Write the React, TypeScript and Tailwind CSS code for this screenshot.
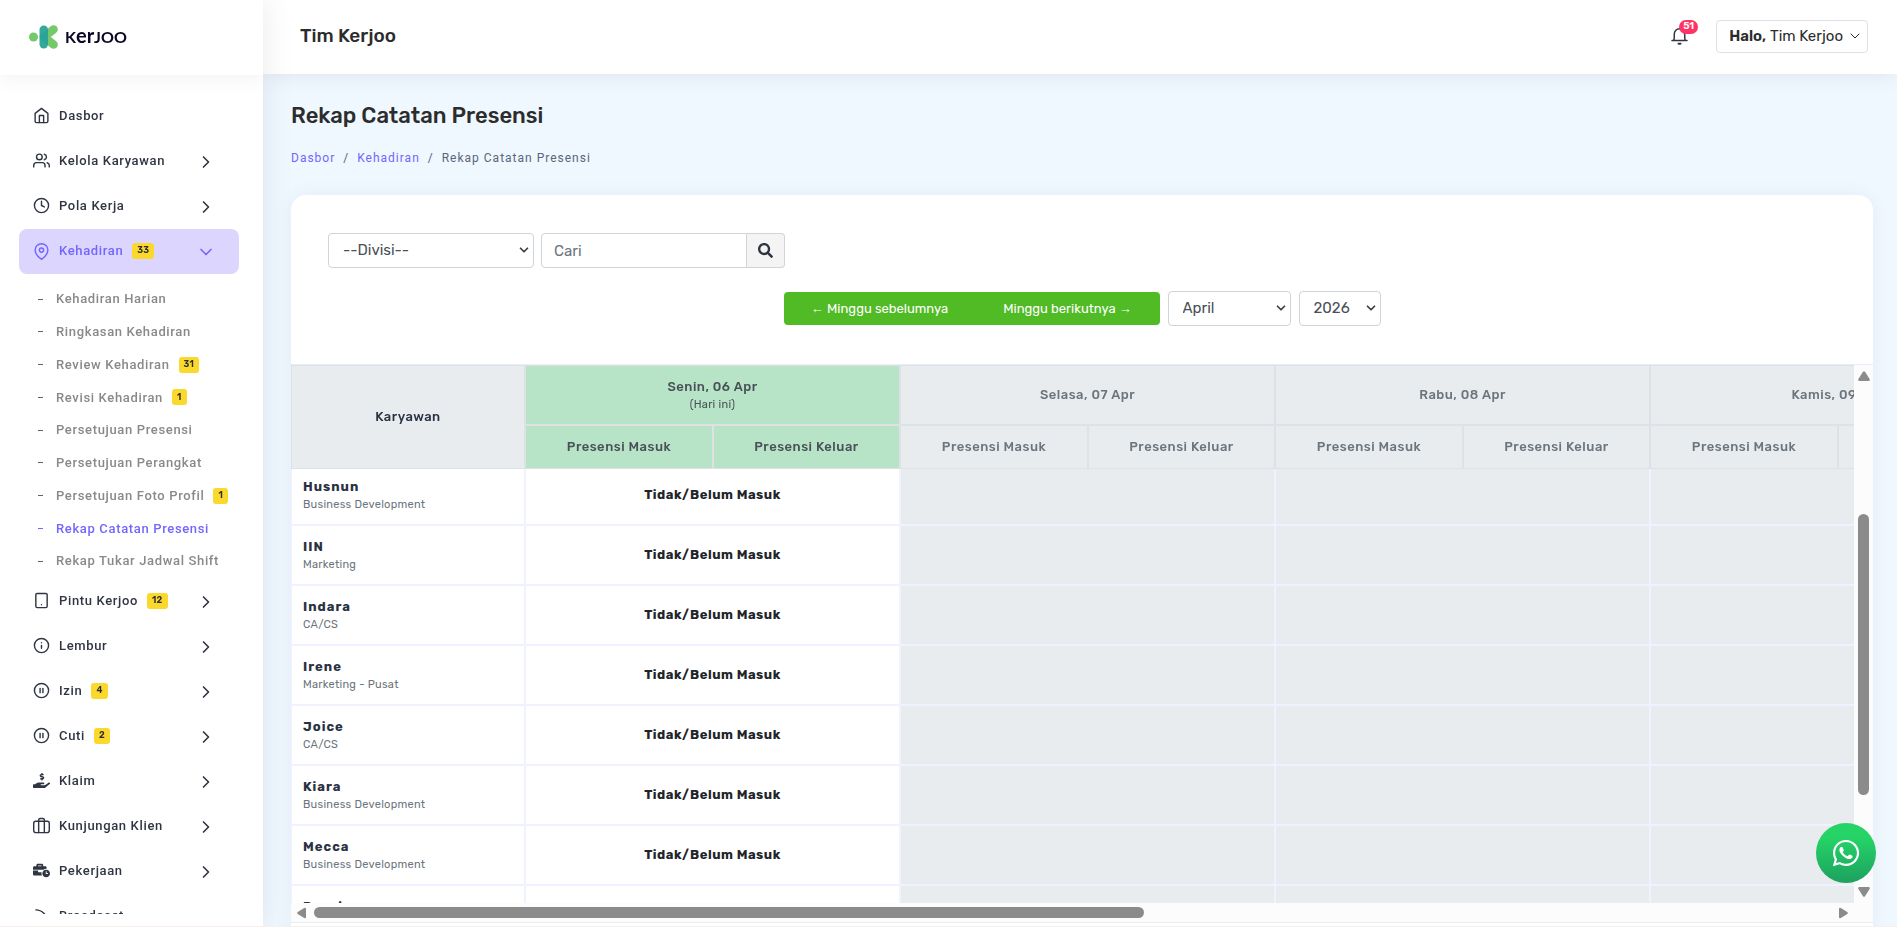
import React, { useEffect, useRef } from "react";
import { ChevronDown, ChevronRight, Info, CirclePause } from "lucide-react";
import { FiClock, FiHome, FiMapPin, FiTablet, FiUsers } from "react-icons/fi";
import { FaBusinessTime, FaHandHoldingUsd, FaSearch, FaWhatsapp } from "react-icons/fa";

const LuggageIcon = ({ className }: { className?: string }) => (
  <svg viewBox="0 0 24 24" className={className} fill="none" stroke="currentColor" strokeWidth="2" strokeLinecap="round" strokeLinejoin="round">
    <rect x="1" y="6" width="22" height="16" rx="3" />
    <path d="M8 22V4a2 2 0 0 1 2-2h4a2 2 0 0 1 2 2v18" />
  </svg>
);

const CastIcon = ({ className }: { className?: string }) => (
  <svg viewBox="0 0 24 24" className={className} fill="none" stroke="currentColor" strokeWidth="2" strokeLinecap="round">
    <path d="M4 4a16 16 0 0 1 16 16M4 11a9 9 0 0 1 9 9" />
    <circle cx="5" cy="19" r="1" />
  </svg>
);

const BellIcon = ({ className }: { className?: string }) => (
  <svg viewBox="0 0 17 17" className={className} fill="none" stroke="currentColor" strokeWidth="1.5" strokeLinecap="round" strokeLinejoin="round">
    <path d="M1 12.500h15M2.800 12.300Q3.300 11.500 3.300 7.500V6a5.200 5.200 0 0 1 10.400 0v1.500q0 4 .5 4.800" />
    <path d="M7.200 15.400Q8.500 16.800 9.800 15.400Z" fill="currentColor" />
  </svg>
);

type Item = {
  label: string;
  icon: React.ComponentType<{ className?: string }>;
  badge?: string;
  leaf?: boolean;
};

const topItems: Item[] = [
  { label: "Dasbor", icon: FiHome, leaf: true },
  { label: "Kelola Karyawan", icon: FiUsers },
  { label: "Pola Kerja", icon: FiClock },
];

const subItems = [
  { label: "Kehadiran Harian" },
  { label: "Ringkasan Kehadiran" },
  { label: "Review Kehadiran", badge: "31" },
  { label: "Revisi Kehadiran", badge: "1" },
  { label: "Persetujuan Presensi" },
  { label: "Persetujuan Perangkat" },
  { label: "Persetujuan Foto Profil", badge: "1" },
  { label: "Rekap Catatan Presensi", active: true },
  { label: "Rekap Tukar Jadwal Shift" },
];

const bottomItems: Item[] = [
  { label: "Pintu Kerjoo", icon: FiTablet, badge: "12" },
  { label: "Lembur", icon: Info },
  { label: "Izin", icon: CirclePause, badge: "4" },
  { label: "Cuti", icon: CirclePause, badge: "2" },
  { label: "Klaim", icon: FaHandHoldingUsd },
  { label: "Kunjungan Klien", icon: LuggageIcon },
  { label: "Pekerjaan", icon: FaBusinessTime },
  { label: "Broadcast", icon: CastIcon, leaf: true },
];

const days = ["Senin, 06 Apr", "Selasa, 07 Apr", "Rabu, 08 Apr", "Kamis, 09 Apr"];

const employees = [
  ["Husnun", "Business Development"],
  ["IIN", "Marketing"],
  ["Indara", "CA/CS"],
  ["Irene", "Marketing - Pusat"],
  ["Joice", "CA/CS"],
  ["Kiara", "Business Development"],
  ["Mecca", "Business Development"],
  ["Rossi", "Marketing"],
];

function Badge({ children }: { children: React.ReactNode }) {
  return (
    <span className="ml-[9px] flex h-4 items-center rounded-[3px] bg-[#fad82c] px-[5px] font-['Rubik','Roboto',sans-serif] text-[9px] font-semibold tracking-wide text-[#2e2e2e]">
      {children}
    </span>
  );
}

function NavItem({ item }: { item: Item }) {
  const Icon = item.icon;
  return (
    <a href="#" className="flex h-[45px] shrink-0 items-center pr-[23px] pl-[14px] text-[#2f3542]">
      <Icon className="mr-[9px] h-[17px] w-[17px] shrink-0" />
      <span>{item.label}</span>
      {item.badge && <Badge>{item.badge}</Badge>}
      {!item.leaf && <ChevronRight className="mt-0.5 ml-auto h-5 w-5" />}
    </a>
  );
}

function Logo() {
  return (
    <a href="#" className="flex items-center gap-[7px] pb-0.5" aria-label="Kerjoo">
      <svg viewBox="0 0 29 24" className="h-6 w-[29px]">
        <circle cx="4.5" cy="12" r="4.5" fill="#75c86c" />
        <path d="M15 12 24.500 4.500M15 12 24.500 19.500" stroke="#75c86c" strokeWidth="8.6" strokeLinecap="round" />
        <rect x="10.5" y="0.5" width="8.5" height="23" rx="4.2" fill="#26a196" fillOpacity="0.93" />
      </svg>
      <span className="font-['Lato'] text-base leading-6 font-bold text-[#0b0526]">
        K<span className="text-xl leading-none">er</span>JOO
      </span>
    </a>
  );
}

function Sidebar() {
  return (
    <aside className="z-20 flex w-[263px] shrink-0 flex-col overflow-hidden bg-white pb-3 shadow-[0_0_28px_rgba(82,85,92,0.12)]">
      <div className="flex h-[75px] shrink-0 items-center pl-[29px] shadow-[0_0_20px_rgba(82,85,92,0.1)]">
        <Logo />
      </div>
      <nav className="mt-[18px] flex min-h-0 flex-1 flex-col overflow-hidden pr-6 pl-[19px] font-['Roboto'] text-[13px] font-medium tracking-wider">
        {topItems.map((item) => (
          <NavItem key={item.label} item={item} />
        ))}
        <a href="#" className="mt-px flex h-[45px] shrink-0 items-center rounded-lg bg-[#dcd6ff] pr-[23px] pb-px pl-[14px] text-[#7366ff]">
          <FiMapPin className="mr-[9px] h-[17px] w-[17px]" />
          <span>Kehadiran</span>
          <Badge>33</Badge>
          <ChevronDown className="mt-0.5 ml-auto h-5 w-5" />
        </a>
        <ul className="flex h-[304px] shrink-0 flex-col justify-between pt-[9px] pb-px">
          {subItems.map((s) => (
            <li key={s.label}>
              <a
                href="#"
                className={`flex h-8 items-center pl-[19px] whitespace-nowrap ${s.active ? "text-[#7366ff]" : "text-[#898989]"}`}
              >
                <span className={`mr-[13px] h-px w-[5px] ${s.active ? "bg-[#7366ff]" : "bg-[#59667a]"}`} />
                {s.label}
                {s.badge && <Badge>{s.badge}</Badge>}
              </a>
            </li>
          ))}
        </ul>
        {bottomItems.map((item) => (
          <NavItem key={item.label} item={item} />
        ))}
      </nav>
    </aside>
  );
}

function Header() {
  return (
    <header className="z-10 flex h-[74px] shrink-0 items-center bg-white pr-[29px] pb-0.5 pl-[37px] shadow-[0_0_20px_rgba(82,85,92,0.12)]">
      <div className="text-[19px] font-medium text-[#2c2c2c]">Tim Kerjoo</div>
      <button className="relative mr-7 ml-auto" aria-label="Notifikasi">
        <BellIcon className="h-[17px] w-[17px] text-[#2f3542]" />
        <span className="absolute -top-2 left-2 flex h-[14px] items-center rounded-full bg-[#ff3364] px-1 text-[10px] font-semibold text-white">51</span>
      </button>
      <button className="flex h-[33px] items-center rounded border border-[#dee2e6] pr-1 pl-3 text-[15px] text-[#2c2c2c]">
        <b className="mr-1 font-semibold">Halo,</b> Tim Kerjoo
        <ChevronDown className="ml-1 h-4 w-4" strokeWidth={1.5} />
      </button>
    </header>
  );
}

function Select({ label, options, width }: { label: string; options: string[]; width: string }) {
  return (
    <div className={`relative ${width}`}>
      <select aria-label={label} className="h-[35px] w-full appearance-none rounded border border-[#ced4da] bg-white px-[14px] text-[15px] text-[#495057]">
        {options.map((o) => (
          <option key={o}>{o}</option>
        ))}
      </select>
      <ChevronDown className="pointer-events-none absolute top-[10px] right-[3px] h-[14px] w-[14px] text-[#3a3f44]" strokeWidth={3} />
    </div>
  );
}

function Filters() {
  return (
    <form className="px-[37px] pt-[38px] pb-[38px]">
      <div className="flex gap-[7px]">
        <Select label="Divisi" options={["--Divisi--"]} width="w-[206px]" />
        <div className="flex">
          <input
            aria-label="Cari"
            placeholder="Cari"
            className="h-[35px] w-[206px] rounded-l border border-[#ced4da] px-3 text-[15px] placeholder:text-[#6c757d]"
          />
          <button type="button" aria-label="Cari karyawan" className="flex w-[38px] items-center justify-center rounded-r border border-l-0 border-[#ced4da] bg-[#f4f4f4]">
            <FaSearch className="h-[15px] w-[15px] text-[#2f3542]" />
          </button>
        </div>
      </div>
      <div className="mt-[23px] flex items-center justify-center">
        <button type="button" className="h-[33px] w-[192px] rounded-l bg-[#51bb25] text-[13px] text-white">← Minggu sebelumnya</button>
        <button type="button" className="mr-2 h-[33px] w-[184px] rounded-r bg-[#51bb25] text-[13px] text-white">Minggu berikutnya →</button>
        <div className="flex gap-2">
          <Select label="Bulan" options={["April"]} width="w-[123px]" />
          <Select label="Tahun" options={["2026"]} width="w-[82px]" />
        </div>
      </div>
    </form>
  );
}

function AttendanceTable() {
  const scroller = useRef<HTMLDivElement>(null);

  useEffect(() => {
    if (scroller.current) scroller.current.scrollTop = 3;
  }, []);

  return (
    <div className="flex h-[559px] shrink-0 flex-col border-y border-[#e6edf8] bg-[#fcfcfc]">
      <div className="flex min-h-0 flex-1">
        <div ref={scroller} className="min-w-0 flex-1 overflow-hidden bg-white">
          <table className="w-[1735px] table-fixed border-separate border-spacing-0 tracking-[0.5px]">
            <colgroup>
              <col className="w-[235px]" />
              {days.map((d) => (
                <React.Fragment key={d}>
                  <col className="w-[188px]" />
                  <col className="w-[187px]" />
                </React.Fragment>
              ))}
            </colgroup>
            <thead className="sticky top-0 z-10 bg-[#e8ecef] text-[13px] text-[#6c757d]">
              <tr className="h-[61px]">
                <th rowSpan={2} className="border border-r-2 border-[#dee2e6] font-medium text-[#2a3142]">
                  Karyawan
                </th>
                {days.map((d, i) => (
                  <th
                    key={d}
                    colSpan={2}
                    className={`border-t border-r-2 border-b-2 border-[#dee2e6] font-medium ${i === 0 ? "bg-[#b7e4c7] text-[#495057]" : ""}`}
                  >
                    {d}
                    {i === 0 && <div className="text-[11px] leading-4 font-normal tracking-wide">(Hari ini)</div>}
                  </th>
                ))}
              </tr>
              <tr className="h-[43px]">
                {days.map((d, i) =>
                  ["Presensi Masuk", "Presensi Keluar"].map((t) => (
                    <th key={d + t} className={`border-r-2 border-b border-[#dee2e6] font-medium ${i === 0 ? "bg-[#b7e4c7] text-[#495057]" : ""}`}>
                      {t}
                    </th>
                  )),
                )}
              </tr>
            </thead>
            <tbody>
              {employees.map(([name, team]) => (
                <tr key={name} className="h-[60px]">
                  <td className="border-r-2 border-b-2 border-l border-[#f0f3ff] pl-[11px] align-top">
                    <div className="mt-3 text-[13px] leading-[18px] font-bold tracking-[1px] text-[#2a3142]">{name}</div>
                    <div className="text-[11px] leading-[18px] tracking-wide text-[#6c757d]">{team}</div>
                  </td>
                  <td colSpan={2} className="border-r-2 border-b-2 border-[#f0f3ff] text-center text-[13px] font-bold text-[#212529]">
                    Tidak/Belum Masuk
                  </td>
                  {days.slice(1).map((d) => (
                    <td key={d} colSpan={2} className="border-r-2 border-b-2 border-[#f0f3ff] bg-[#e8ecef]" />
                  ))}
                </tr>
              ))}
            </tbody>
          </table>
        </div>
        {/* Vertical scrollbar */}
        <div className="flex w-[19px] shrink-0 flex-col items-center py-[6px]">
          <svg viewBox="0 0 12 10" className="h-[10px] w-3" fill="#8b8b8b">
            <path d="M5 .8Q6-.4 7 .8L11.600 8Q12.400 10 10.500 10H1.500Q-.4 10 .4 8Z" />
          </svg>
          <div className="mt-[133px] h-[281px] w-[11px] rounded-full bg-[#8b8b8b]" />
          <svg viewBox="0 0 12 10" className="mt-auto h-[10px] w-3 rotate-180" fill="#8b8b8b">
            <path d="M5 .8Q6-.4 7 .8L11.600 8Q12.400 10 10.500 10H1.500Q-.4 10 .4 8Z" />
          </svg>
        </div>
      </div>
      {/* Horizontal scrollbar */}
      <div className="flex h-[19px] shrink-0 items-center pr-[25px] pl-[6px]">
        <svg viewBox="0 0 10 12" className="h-3 w-[9px]" fill="#8b8b8b">
          <path d="M.8 5Q-.4 6 .8 7L8 11.600Q10 12.400 10 10.500V1.500Q10-.4 8 .4Z" />
        </svg>
        <div className="ml-2 h-[11px] w-[53.5%] rounded-full bg-[#8b8b8b]" />
        <svg viewBox="0 0 10 12" className="ml-auto h-3 w-[9px] rotate-180" fill="#8b8b8b">
          <path d="M.8 5Q-.4 6 .8 7L8 11.600Q10 12.400 10 10.500V1.500Q10-.4 8 .4Z" />
        </svg>
      </div>
    </div>
  );
}

export default function App() {
  return (
    <div className="flex h-screen overflow-hidden border-b border-[#f8efeb] bg-[#eff7ff] font-['Rubik','Roboto',sans-serif]">
      <Sidebar />
      <div className="flex min-w-0 flex-1 flex-col">
        <Header />
        <main className="flex min-h-0 flex-1 flex-col overflow-hidden pr-6 pl-7">
          <h1 className="mt-[26px] text-[22px] leading-8 font-medium text-[#2c2c2c]">Rekap Catatan Presensi</h1>
          <nav className="mt-[17px] flex gap-2 font-['Roboto'] text-xs leading-[18px] tracking-[1px] text-[#59667a]">
            <a href="#" className="text-[#7366ff]">Dasbor</a>
            <span>/</span>
            <a href="#" className="text-[#7366ff]">Kehadiran</a>
            <span>/</span>
            <span>Rekap Catatan Presensi</span>
          </nav>
          <section className="mt-7 flex shrink-0 flex-col rounded-t-[15px] bg-white pb-8 shadow-[0_0_20px_rgba(8,21,66,0.05)]">
            <Filters />
            <AttendanceTable />
          </section>
        </main>
      </div>
      <a
        href="#"
        aria-label="WhatsApp"
        className="fixed right-[21px] bottom-11 z-30 flex h-[60px] w-[60px] items-center justify-center rounded-full bg-linear-to-b from-[#25d366] from-25% to-[#1da15f] text-white"
      >
        <FaWhatsapp className="h-[30px] w-[30px]" />
      </a>
    </div>
  );
}
